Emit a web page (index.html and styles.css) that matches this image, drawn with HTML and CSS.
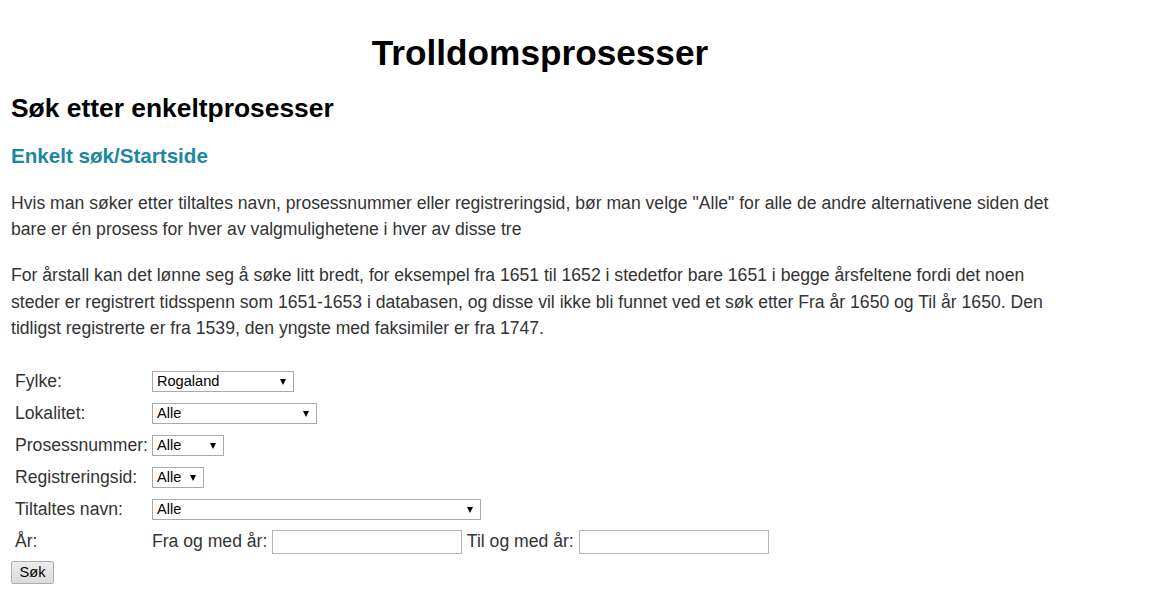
FILE: index.html
```html
<!DOCTYPE html>
<html lang="no">
<head>
<meta charset="utf-8">
<title>Trolldomsprosesser</title>
<link rel="stylesheet" href="styles.css">
</head>
<body>
<div class="page">
  <h1 class="title">Trolldomsprosesser</h1>
  <h2 class="subtitle">Søk etter enkeltprosesser</h2>
  <h3 class="section">Enkelt søk/Startside</h3>
  <p class="text">Hvis man søker etter tiltaltes navn, prosessnummer eller registreringsid, bør man velge "Alle" for alle de andre alternativene siden det bare er én prosess for hver av valgmulighetene i hver av disse tre</p>
  <p class="text">For årstall kan det lønne seg å søke litt bredt, for eksempel fra 1651 til 1652 i stedetfor bare 1651 i begge årsfeltene fordi det noen steder er registrert tidsspenn som 1651-1653 i databasen, og disse vil ikke bli funnet ved et søk etter Fra år 1650 og Til år 1650. Den tidligst registrerte er fra 1539, den yngste med faksimiler er fra 1747.</p>
  <form class="search">
    <table class="fields">
      <tr>
        <td class="label">Fylke:</td>
        <td><span class="sel w-fylke"><select><option>Rogaland</option></select></span></td>
      </tr>
      <tr>
        <td class="label">Lokalitet:</td>
        <td><span class="sel w-lok"><select><option>Alle</option></select></span></td>
      </tr>
      <tr>
        <td class="label">Prosessnummer:</td>
        <td><span class="sel w-pros"><select><option>Alle</option></select></span></td>
      </tr>
      <tr>
        <td class="label">Registreringsid:</td>
        <td><span class="sel w-reg"><select><option>Alle</option></select></span></td>
      </tr>
      <tr>
        <td class="label">Tiltaltes navn:</td>
        <td><span class="sel w-navn"><select><option>Alle</option></select></span></td>
      </tr>
      <tr>
        <td class="label">År:</td>
        <td class="years">Fra og med år: <input class="year" type="text"> Til og med år: <input class="year" type="text"></td>
      </tr>
    </table>
    <button class="submit" type="button">Søk</button>
  </form>
</div>
</body>
</html>
```

FILE: styles.css
```css
html, body {
  margin: 0;
  padding: 0;
  background: #ffffff;
}

body {
  font-family: "Liberation Sans", Arial, sans-serif;
  color: #333333;
}

.page {
  width: 1058px;
  margin-left: 11px;
  padding-top: 33px;
}

.title {
  font-size: 35.2px;
  font-weight: bold;
  color: #000000;
  text-align: center;
  line-height: 40px;
  margin: 0 0 20px;
}

.subtitle {
  font-size: 26.4px;
  font-weight: bold;
  color: #000000;
  line-height: 30px;
  margin: 0 0 20.5px;
}

.section {
  font-size: 20.6px;
  font-weight: bold;
  color: #1b87a3;
  line-height: 24px;
  margin: 0 0 22px;
}

.text {
  font-size: 17.6px;
  line-height: 26.4px;
  margin: 0 0 20px;
}

.search {
  margin-top: 0;
  padding-top: 3px;
}

.fields {
  border-collapse: separate;
  border-spacing: 2px;
  margin-left: 1px;
  font-size: 17.6px;
  color: #333333;
}

.fields td {
  height: 30px;
  padding: 0 1px;
  vertical-align: middle;
  white-space: nowrap;
}

.label {
  padding-right: 4px;
}

.sel {
  position: relative;
  display: inline-block;
  vertical-align: middle;
}

.sel select {
  -webkit-appearance: none;
  appearance: none;
  display: block;
  width: 100%;
  height: 21px;
  margin: 0;
  padding: 0 20px 0 4px;
  border: 1px solid #a9a9a9;
  border-radius: 0;
  background: #ffffff;
  font-family: "Liberation Sans", Arial, sans-serif;
  font-size: 14.6px;
  color: #000000;
  line-height: 19px;
}

.sel::after {
  content: "";
  position: absolute;
  right: 8px;
  top: 8px;
  width: 0;
  height: 0;
  border-left: 3.5px solid transparent;
  border-right: 3.5px solid transparent;
  border-top: 6px solid #000000;
  pointer-events: none;
}

.w-fylke { width: 142px; }
.w-lok { width: 165px; }
.w-pros { width: 72px; }
.w-reg { width: 52px; }
.w-navn { width: 329px; }

.years {
  color: #333333;
}

.year {
  box-sizing: border-box;
  width: 190px;
  height: 24px;
  margin: 0;
  padding: 0 3px;
  border: 1px solid #b5b5b5;
  border-radius: 0;
  background: #ffffff;
  vertical-align: middle;
  font-family: "Liberation Sans", Arial, sans-serif;
  font-size: 14.6px;
}

.submit {
  display: block;
  box-sizing: border-box;
  width: 43px;
  height: 23px;
  margin: 2px 0 0 0;
  padding: 0;
  border: 1px solid #adadad;
  border-radius: 2px;
  background: linear-gradient(#ececec, #dcdcdc);
  font-family: "Liberation Sans", Arial, sans-serif;
  font-size: 14.6px;
  color: #000000;
}
```
